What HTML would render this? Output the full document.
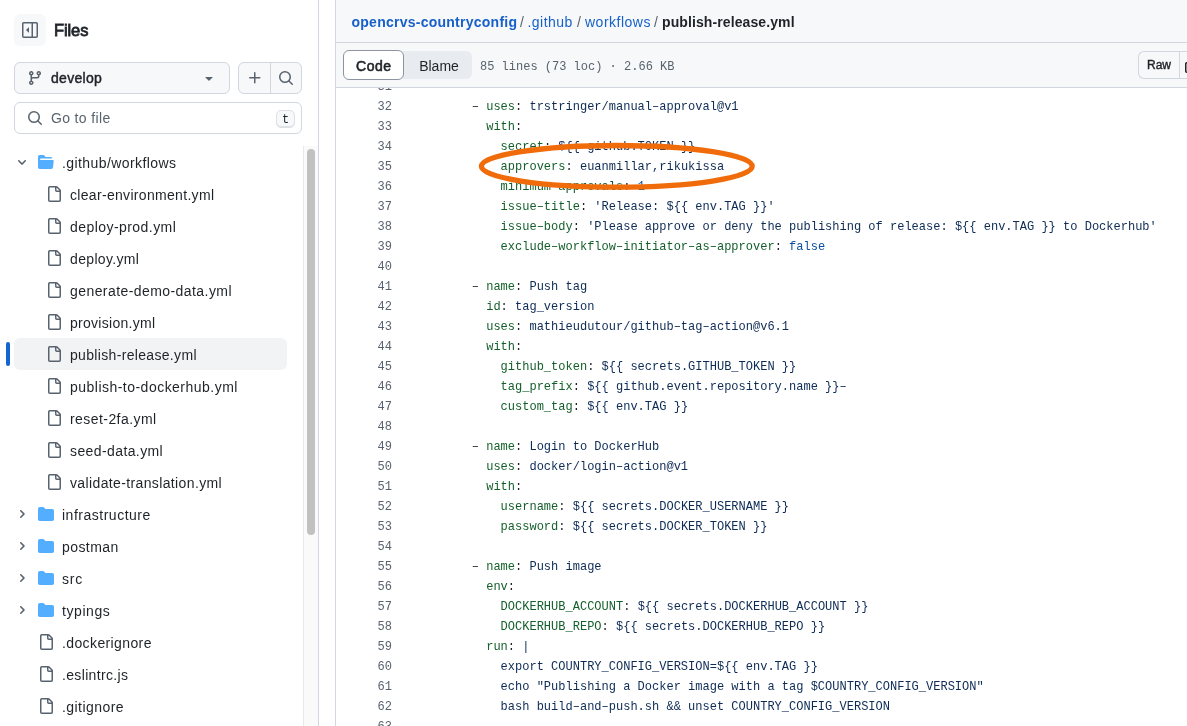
<!DOCTYPE html>
<html><head><meta charset="utf-8">
<style>
*{box-sizing:border-box;margin:0;padding:0}
html,body{width:1187px;height:726px;overflow:hidden;background:#fff;-webkit-font-smoothing:antialiased;font-family:"Liberation Sans",sans-serif;color:#1f2328}
.abs{position:absolute}
#side{position:absolute;left:0;top:0;width:319px;height:726px;border-right:1px solid #d1d7de;background:#fff}
.btn-sb{position:absolute;left:14px;top:14px;width:32px;height:32px;border-radius:6px;background:#f6f8fa}
.files{position:absolute;left:54px;top:20px;font-size:16.5px;letter-spacing:-0.1px;-webkit-text-stroke:0.8px #1f2328;line-height:20px;color:#1f2328}
.branch{position:absolute;left:14px;top:62px;width:216px;height:32px;border:1px solid #d1d7de;border-radius:6px;background:#f6f8fa}
.grp{position:absolute;left:238px;top:62px;width:64px;height:32px;border:1px solid #d1d7de;border-radius:6px;background:#f6f8fa}
.grp .div{position:absolute;left:31px;top:0;width:1px;height:30px;background:#d1d7de}
.goto{position:absolute;left:14px;top:102px;width:288px;height:32px;border:1px solid #d1d7de;border-radius:6px;background:#fff}
.kbd{position:absolute;left:261px;top:7px;width:19px;height:18px;border:1px solid #dde1e6;border-radius:5px;background:#f6f8fa;box-shadow:inset 0 -1px 0 #dde1e6;font-family:"Liberation Mono",monospace;font-size:12px;line-height:18px;text-align:center;color:#1f2328}
.row{position:absolute;left:0;height:32px;width:287px;font-size:14px;line-height:32px;white-space:nowrap;color:#1f2328}
.row.active{left:14px;width:273px;background:#f0f2f4;border-radius:6px}
.row span{position:absolute;top:0}
.row svg{position:absolute}
#track{position:absolute;left:303px;top:146px;width:15px;height:580px;background:#fafafa;border-left:1px solid #e8e8e8}
#thumb{position:absolute;left:307px;top:149px;width:8px;height:386px;border-radius:4px;background:#c1c1c1}
#hdr{position:absolute;left:335px;top:0;width:852px;height:88px;background:#f6f8fa;border-left:1px solid #d1d7de}
#hdr .b1{position:absolute;left:0;top:42px;width:852px;height:1px;background:#d1d7de}
#hdr .b2{position:absolute;left:0;top:87px;width:852px;height:1px;background:#d1d7de}
.crumb{position:absolute;left:0;top:11.5px;font-size:14px;line-height:20px;white-space:nowrap}
.crumb a{color:#1860c9;text-decoration:none}
.crumb .sep{color:#59636e}
.seg{position:absolute;left:8px;top:51px;width:128px;height:28px;border-radius:6px;background:#e8ebef}
.seg .code{position:absolute;left:-1px;top:-1px;width:61px;height:30px;border:1px solid #8c959f;border-radius:6px;background:#fff;font-size:14px;line-height:31px;text-align:center;-webkit-text-stroke:0.6px #1f2328;letter-spacing:0.5px;text-indent:0.5px}
.seg .blame{position:absolute;left:61px;top:0;width:68px;height:28px;font-size:14px;line-height:31px;text-align:center;color:#1f2328}
.meta{position:absolute;left:144px;top:56.5px;font-family:"Liberation Mono",monospace;font-size:12px;line-height:20px;color:#59636e;white-space:nowrap}
.raw{position:absolute;left:802px;top:51px;width:41px;height:28px;border:1px solid #d1d7de;border-right:none;border-radius:6px 0 0 6px;background:#f6f8fa;font-size:12px;line-height:27px;text-align:center;-webkit-text-stroke:0.4px #1f2328}
.raw2{position:absolute;left:843px;top:51px;width:30px;height:28px;border:1px solid #d1d7de;background:#f6f8fa;overflow:hidden}
#code{position:absolute;left:335px;top:88px;width:852px;height:638px;border-left:1px solid #d1d7de;overflow:hidden;background:#fff}
#lines{position:absolute;left:0;top:-11px;width:852px}
.ln{position:relative;height:20px;font-family:"Liberation Mono",monospace;font-size:12.03px;line-height:20px;white-space:pre}
.ln .n{position:absolute;left:0;width:56px;text-align:right;color:#59636e}
.ln .t{position:absolute;left:92.5px;color:#1f2328}
.e{color:#135e2a}.s{color:#0d2b55}.c{color:#0a4fa3}
</style></head><body><div id="wrap" style="position:absolute;left:0;top:0;width:1187px;height:726px;will-change:transform">
<svg width="0" height="0" style="position:absolute"><defs>
<symbol id="i-file" viewBox="0 0 16 16"><path fill="#59636e" d="M2 1.75C2 .784 2.784 0 3.75 0h6.586c.464 0 .909.184 1.237.513l2.914 2.914c.329.328.513.773.513 1.237v9.586A1.75 1.75 0 0 1 13.25 16h-9.5A1.75 1.75 0 0 1 2 14.25Zm1.75-.25a.25.25 0 0 0-.25.25v12.5c0 .138.112.25.25.25h9.5a.25.25 0 0 0 .25-.25V6h-2.75A1.75 1.75 0 0 1 9 4.25V1.5Zm6.75.062V4.25c0 .138.112.25.25.25h2.688l-.011-.013-2.914-2.914-.013-.011Z"/></symbol>
<symbol id="i-dir" viewBox="0 0 16 16"><path fill="#54aeff" d="M1.75 1A1.75 1.75 0 0 0 0 2.75v10.5C0 14.216.784 15 1.75 15h12.5A1.75 1.75 0 0 0 16 13.25v-8.5A1.75 1.75 0 0 0 14.25 3H7.5a.25.25 0 0 1-.2-.1l-.9-1.2C6.07 1.26 5.55 1 5 1H1.75Z"/></symbol>
<symbol id="i-diropen" viewBox="0 0 16 16"><path fill="#54aeff" d="M.513 1.513A1.75 1.75 0 0 1 1.75 1h3.5c.55 0 1.07.26 1.4.7l.9 1.2a.25.25 0 0 0 .2.1H13a1 1 0 0 1 1 1v.5H2.75a.75.75 0 0 0 0 1.5h11.978a1 1 0 0 1 .994 1.117L15 13.25A1.75 1.75 0 0 1 13.25 15H1.75A1.75 1.75 0 0 1 0 13.25V2.75c0-.464.184-.91.513-1.237Z"/></symbol>
<symbol id="i-chr" viewBox="0 0 12 12"><path fill="#59636e" d="M4.7 10c-.2 0-.4-.1-.5-.2-.3-.3-.3-.8 0-1.1L6.9 6 4.2 3.3c-.3-.3-.3-.8 0-1.1.3-.3.8-.3 1.1 0l3.3 3.3c.3.3.3.8 0 1.1L5.3 9.7c-.2.2-.4.3-.6.3Z"/></symbol>
<symbol id="i-chd" viewBox="0 0 12 12"><path fill="#59636e" d="M6 8.825c-.2 0-.4-.1-.5-.2l-3.3-3.3c-.3-.3-.3-.8 0-1.1.3-.3.8-.3 1.1 0l2.7 2.7 2.7-2.7c.3-.3.8-.3 1.1 0 .3.3.3.8 0 1.1l-3.3 3.3c-.1.1-.3.2-.5.2Z"/></symbol>
</defs></svg>
<div id="side">
  <div class="btn-sb"><svg class="abs" style="left:8px;top:8px" width="16" height="16" viewBox="0 0 16 16"><path fill="#59636e" d="M4.177 7.823 6.573 5.427A.25.25 0 0 1 7 5.604v4.792a.25.25 0 0 1-.427.177L4.177 8.177a.25.25 0 0 1 0-.354Z"/><path fill="#59636e" d="M1.75 0h12.5C15.216 0 16 .784 16 1.75v12.5A1.75 1.75 0 0 1 14.25 16H1.75A1.75 1.75 0 0 1 0 14.25V1.75C0 .784.784 0 1.75 0ZM1.5 1.75v12.5c0 .138.112.25.25.25H9.5v-13H1.75a.25.25 0 0 0-.25.25ZM11 14.5h3.25a.25.25 0 0 0 .25-.25V1.75a.25.25 0 0 0-.25-.25H11Z"/></svg></div>
  <div class="files">Files</div>
  <div class="branch"><svg class="abs" style="left:12px;top:7px" width="16" height="16" viewBox="0 0 16 16"><path fill="#59636e" d="M9.5 3.25a2.25 2.25 0 1 1 3 2.122V6A2.5 2.5 0 0 1 10 8.5H6a1 1 0 0 0-1 1v1.128a2.251 2.251 0 1 1-1.5 0V5.372a2.25 2.25 0 1 1 1.5 0v1.836A2.493 2.493 0 0 1 6 7h4a1 1 0 0 0 1-1v-.628A2.25 2.25 0 0 1 9.5 3.25Zm-6 0a.75.75 0 1 0 1.5 0 .75.75 0 0 0-1.5 0Zm8.25-.75a.75.75 0 1 0 0 1.5.75.75 0 0 0 0-1.5ZM4.25 12a.75.75 0 1 0 0 1.5.75.75 0 0 0 0-1.5Z"/></svg><span class="abs" style="left:36px;top:5px;font-size:14px;line-height:20px;color:#1f2328;-webkit-text-stroke:0.45px #1f2328;letter-spacing:0.3px">develop</span><svg class="abs" style="left:186px;top:7px" width="16" height="16" viewBox="0 0 16 16"><path fill="#59636e" d="m4.427 7.427 3.396 3.396a.25.25 0 0 0 .354 0l3.396-3.396A.25.25 0 0 0 11.396 7H4.604a.25.25 0 0 0-.177.427Z"/></svg></div>
  <div class="grp"><div class="div"></div><svg class="abs" style="left:8px;top:7px" width="16" height="16" viewBox="0 0 16 16"><path fill="#59636e" d="M7.75 2a.75.75 0 0 1 .75.75V7h4.25a.75.75 0 0 1 0 1.5H8.5v4.25a.75.75 0 0 1-1.5 0V8.5H2.75a.75.75 0 0 1 0-1.5H7V2.75A.75.75 0 0 1 7.75 2Z"/></svg><svg class="abs" style="left:39px;top:7px" width="16" height="16" viewBox="0 0 16 16"><path fill="#59636e" d="M10.68 11.74a6 6 0 0 1-7.922-8.982 6 6 0 0 1 8.982 7.922l3.04 3.04a.749.749 0 0 1-.326 1.275.749.749 0 0 1-.734-.215ZM11.5 7a4.499 4.499 0 1 0-8.997 0A4.499 4.499 0 0 0 11.5 7Z"/></svg></div>
  <div class="goto"><svg class="abs" style="left:12px;top:7px" width="16" height="16" viewBox="0 0 16 16"><path fill="#59636e" d="M10.68 11.74a6 6 0 0 1-7.922-8.982 6 6 0 0 1 8.982 7.922l3.04 3.04a.749.749 0 0 1-.326 1.275.749.749 0 0 1-.734-.215ZM11.5 7a4.499 4.499 0 1 0-8.997 0A4.499 4.499 0 0 0 11.5 7Z"/></svg><span class="abs" style="left:36px;top:5px;font-size:14px;line-height:20px;color:#59636e;letter-spacing:0.35px">Go to file</span><div class="kbd">t</div></div>
<div id="tree">
<div class="row" style="top:146px"><svg class="abs" style="left:16px;top:10px" width="12" height="12"><use href="#i-chd"/></svg><svg class="abs" style="left:38px;top:8px" width="16" height="16"><use href="#i-diropen"/></svg><span style="left:62px;top:1px;letter-spacing:0.412px">.github/workflows</span></div>
<div class="row" style="top:178px"><svg class="abs" style="left:46px;top:8px" width="16" height="16"><use href="#i-file"/></svg><span style="left:70px;top:1px;letter-spacing:0.315px">clear-environment.yml</span></div>
<div class="row" style="top:210px"><svg class="abs" style="left:46px;top:8px" width="16" height="16"><use href="#i-file"/></svg><span style="left:70px;top:1px;letter-spacing:0.443px">deploy-prod.yml</span></div>
<div class="row" style="top:242px"><svg class="abs" style="left:46px;top:8px" width="16" height="16"><use href="#i-file"/></svg><span style="left:70px;top:1px;letter-spacing:0.344px">deploy.yml</span></div>
<div class="row" style="top:274px"><svg class="abs" style="left:46px;top:8px" width="16" height="16"><use href="#i-file"/></svg><span style="left:70px;top:1px;letter-spacing:0.429px">generate-demo-data.yml</span></div>
<div class="row" style="top:306px"><svg class="abs" style="left:46px;top:8px" width="16" height="16"><use href="#i-file"/></svg><span style="left:70px;top:1px;letter-spacing:0.283px">provision.yml</span></div>
<div class="row" style="top:338px"><div class="abs" style="left:14px;top:0;width:273px;height:32px;background:#f2f3f5;border-radius:6px"></div><div class="abs" style="left:6px;top:4px;width:4px;height:24px;border-radius:2px;background:#1565d0"></div><svg class="abs" style="left:46px;top:8px" width="16" height="16"><use href="#i-file"/></svg><span style="left:70px;top:1px;letter-spacing:0.328px">publish-release.yml</span></div>
<div class="row" style="top:370px"><svg class="abs" style="left:46px;top:8px" width="16" height="16"><use href="#i-file"/></svg><span style="left:70px;top:1px;letter-spacing:0.478px">publish-to-dockerhub.yml</span></div>
<div class="row" style="top:402px"><svg class="abs" style="left:46px;top:8px" width="16" height="16"><use href="#i-file"/></svg><span style="left:70px;top:1px;letter-spacing:0.433px">reset-2fa.yml</span></div>
<div class="row" style="top:434px"><svg class="abs" style="left:46px;top:8px" width="16" height="16"><use href="#i-file"/></svg><span style="left:70px;top:1px;letter-spacing:0.4px">seed-data.yml</span></div>
<div class="row" style="top:466px"><svg class="abs" style="left:46px;top:8px" width="16" height="16"><use href="#i-file"/></svg><span style="left:70px;top:1px;letter-spacing:0.37px">validate-translation.yml</span></div>
<div class="row" style="top:498px"><svg class="abs" style="left:16px;top:10px" width="12" height="12"><use href="#i-chr"/></svg><svg class="abs" style="left:38px;top:8px" width="16" height="16"><use href="#i-dir"/></svg><span style="left:62px;top:1px;letter-spacing:0.508px">infrastructure</span></div>
<div class="row" style="top:530px"><svg class="abs" style="left:16px;top:10px" width="12" height="12"><use href="#i-chr"/></svg><svg class="abs" style="left:38px;top:8px" width="16" height="16"><use href="#i-dir"/></svg><span style="left:62px;top:1px;letter-spacing:0.433px">postman</span></div>
<div class="row" style="top:562px"><svg class="abs" style="left:16px;top:10px" width="12" height="12"><use href="#i-chr"/></svg><svg class="abs" style="left:38px;top:8px" width="16" height="16"><use href="#i-dir"/></svg><span style="left:62px;top:1px;letter-spacing:0.75px">src</span></div>
<div class="row" style="top:594px"><svg class="abs" style="left:16px;top:10px" width="12" height="12"><use href="#i-chr"/></svg><svg class="abs" style="left:38px;top:8px" width="16" height="16"><use href="#i-dir"/></svg><span style="left:62px;top:1px;letter-spacing:0.583px">typings</span></div>
<div class="row" style="top:626px"><svg class="abs" style="left:38px;top:8px" width="16" height="16"><use href="#i-file"/></svg><span style="left:62px;top:1px;letter-spacing:0.383px">.dockerignore</span></div>
<div class="row" style="top:658px"><svg class="abs" style="left:38px;top:8px" width="16" height="16"><use href="#i-file"/></svg><span style="left:62px;top:1px;letter-spacing:0.336px">.eslintrc.js</span></div>
<div class="row" style="top:690px"><svg class="abs" style="left:38px;top:8px" width="16" height="16"><use href="#i-file"/></svg><span style="left:62px;top:1px;letter-spacing:0.444px">.gitignore</span></div>
<div class="row" style="top:722px"><svg class="abs" style="left:38px;top:8px" width="16" height="16"><use href="#i-file"/></svg><span style="left:62px;top:1px;letter-spacing:0.4px">.prettierrc</span></div>
</div>
</div>
<div id="track"></div><div id="thumb"></div>
<div id="hdr">
  <div class="b1"></div><div class="b2"></div>
  <div class="crumb"><a class="abs" style="left:15.5px;font-weight:bold;letter-spacing:0.25px">opencrvs-countryconfig</a><span class="abs sep" style="left:184px">/</span><a class="abs" style="left:191.5px;letter-spacing:0.45px">.github</a><span class="abs sep" style="left:241px">/</span><a class="abs" style="left:249px;letter-spacing:0.5px">workflows</a><span class="abs sep" style="left:318px">/</span><b class="abs" style="left:326px;letter-spacing:0.1px">publish-release.yml</b></div>
  <div class="seg"><div class="code">Code</div><div class="blame">Blame</div></div>
  <div class="meta">85 lines (73 loc) · 2.66 KB</div>
  <div class="raw">Raw</div><div class="raw2"><svg class="abs" style="left:5px;top:5px" width="16" height="16" viewBox="0 0 16 16"><path fill="#1f2328" d="M0 6.75C0 5.784.784 5 1.75 5h1.5a.75.75 0 0 1 0 1.5h-1.5a.25.25 0 0 0-.25.25v7.5c0 .138.112.25.25.25h7.5a.25.25 0 0 0 .25-.25v-1.5a.75.75 0 0 1 1.5 0v1.5A1.75 1.75 0 0 1 9.25 16h-7.5A1.75 1.75 0 0 1 0 14.25Z"/><path fill="#1f2328" d="M5 1.75C5 .784 5.784 0 6.75 0h7.5C15.216 0 16 .784 16 1.75v7.5A1.75 1.75 0 0 1 14.25 11h-7.5A1.75 1.75 0 0 1 5 9.25Zm1.75-.25a.25.25 0 0 0-.25.25v7.5c0 .138.112.25.25.25h7.5a.25.25 0 0 0 .25-.25v-7.5a.25.25 0 0 0-.25-.25Z"/></svg></div>
</div>
<div id="code"><div id="lines">
<div class="ln"><span class="n">31</span><span class="t"></span></div>
<div class="ln"><span class="n">32</span><span class="t">      &#8211; <span class="e">uses</span>: <span class="s">trstringer/manual&#8211;approval@v1</span></span></div>
<div class="ln"><span class="n">33</span><span class="t">        <span class="e">with</span>:</span></div>
<div class="ln"><span class="n">34</span><span class="t">          <span class="e">secret</span>: <span class="s">${{ github.TOKEN }}</span></span></div>
<div class="ln"><span class="n">35</span><span class="t">          <span class="e">approvers</span>: <span class="s">euanmillar,rikukissa</span></span></div>
<div class="ln"><span class="n">36</span><span class="t">          <span class="e">minimum&#8211;approvals</span>: <span class="c">1</span></span></div>
<div class="ln"><span class="n">37</span><span class="t">          <span class="e">issue&#8211;title</span>: <span class="s">&#x27;Release: ${{ env.TAG }}&#x27;</span></span></div>
<div class="ln"><span class="n">38</span><span class="t">          <span class="e">issue&#8211;body</span>: <span class="s">&#x27;Please approve or deny the publishing of release: ${{ env.TAG }} to Dockerhub&#x27;</span></span></div>
<div class="ln"><span class="n">39</span><span class="t">          <span class="e">exclude&#8211;workflow&#8211;initiator&#8211;as&#8211;approver</span>: <span class="c">false</span></span></div>
<div class="ln"><span class="n">40</span><span class="t"></span></div>
<div class="ln"><span class="n">41</span><span class="t">      &#8211; <span class="e">name</span>: <span class="s">Push tag</span></span></div>
<div class="ln"><span class="n">42</span><span class="t">        <span class="e">id</span>: <span class="s">tag_version</span></span></div>
<div class="ln"><span class="n">43</span><span class="t">        <span class="e">uses</span>: <span class="s">mathieudutour/github&#8211;tag&#8211;action@v6.1</span></span></div>
<div class="ln"><span class="n">44</span><span class="t">        <span class="e">with</span>:</span></div>
<div class="ln"><span class="n">45</span><span class="t">          <span class="e">github_token</span>: <span class="s">${{ secrets.GITHUB_TOKEN }}</span></span></div>
<div class="ln"><span class="n">46</span><span class="t">          <span class="e">tag_prefix</span>: <span class="s">${{ github.event.repository.name }}&#8211;</span></span></div>
<div class="ln"><span class="n">47</span><span class="t">          <span class="e">custom_tag</span>: <span class="s">${{ env.TAG }}</span></span></div>
<div class="ln"><span class="n">48</span><span class="t"></span></div>
<div class="ln"><span class="n">49</span><span class="t">      &#8211; <span class="e">name</span>: <span class="s">Login to DockerHub</span></span></div>
<div class="ln"><span class="n">50</span><span class="t">        <span class="e">uses</span>: <span class="s">docker/login&#8211;action@v1</span></span></div>
<div class="ln"><span class="n">51</span><span class="t">        <span class="e">with</span>:</span></div>
<div class="ln"><span class="n">52</span><span class="t">          <span class="e">username</span>: <span class="s">${{ secrets.DOCKER_USERNAME }}</span></span></div>
<div class="ln"><span class="n">53</span><span class="t">          <span class="e">password</span>: <span class="s">${{ secrets.DOCKER_TOKEN }}</span></span></div>
<div class="ln"><span class="n">54</span><span class="t"></span></div>
<div class="ln"><span class="n">55</span><span class="t">      &#8211; <span class="e">name</span>: <span class="s">Push image</span></span></div>
<div class="ln"><span class="n">56</span><span class="t">        <span class="e">env</span>:</span></div>
<div class="ln"><span class="n">57</span><span class="t">          <span class="e">DOCKERHUB_ACCOUNT</span>: <span class="s">${{ secrets.DOCKERHUB_ACCOUNT }}</span></span></div>
<div class="ln"><span class="n">58</span><span class="t">          <span class="e">DOCKERHUB_REPO</span>: <span class="s">${{ secrets.DOCKERHUB_REPO }}</span></span></div>
<div class="ln"><span class="n">59</span><span class="t">        <span class="e">run</span>: <span class="s">|</span></span></div>
<div class="ln"><span class="n">60</span><span class="t">          <span class="s">export COUNTRY_CONFIG_VERSION=${{ env.TAG }}</span></span></div>
<div class="ln"><span class="n">61</span><span class="t">          <span class="s">echo &quot;Publishing a Docker image with a tag $COUNTRY_CONFIG_VERSION&quot;</span></span></div>
<div class="ln"><span class="n">62</span><span class="t">          <span class="s">bash build&#8211;and&#8211;push.sh &amp;&amp; unset COUNTRY_CONFIG_VERSION</span></span></div>
<div class="ln"><span class="n">63</span><span class="t"></span></div>
<div class="ln"><span class="n">64</span><span class="t"></span></div>
</div></div>
<svg class="abs" style="left:0;top:0" width="1187" height="726"><ellipse cx="616.8" cy="166.3" rx="135.4" ry="20.8" fill="none" stroke="#f06c0a" stroke-width="5.3"/></svg>
</div></body></html>
